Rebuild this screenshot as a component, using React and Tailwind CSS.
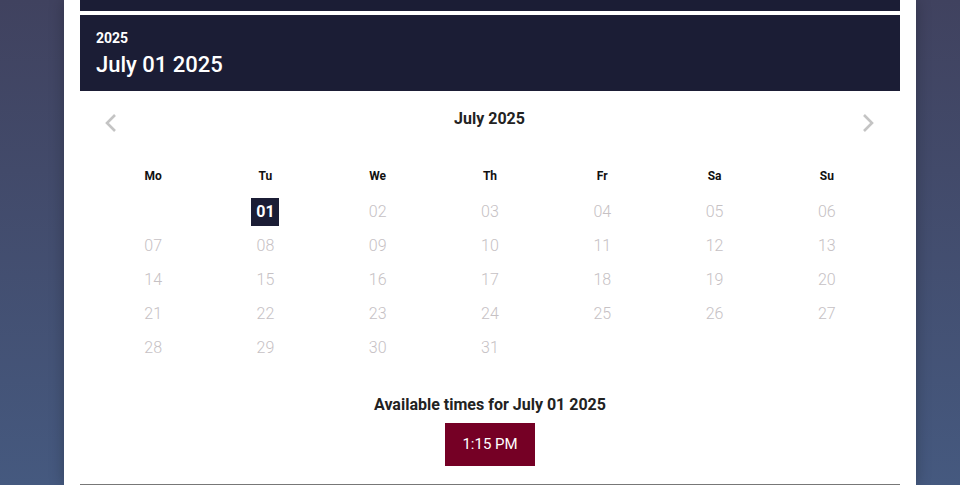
const days = Array.from({ length: 31 }, (_, i) => String(i + 1).padStart(2, '0'))
const heads = ['Mo', 'Tu', 'We', 'Th', 'Fr', 'Sa', 'Su']

function Chevron({ dir }) {
  return (
    <svg width="14" height="20" viewBox="0 0 14 20" fill="none" stroke="#c4c4c4" strokeWidth="2.6">
      {dir === 'left' ? <path d="M11 2 L3 10 L11 18" /> : <path d="M3 2 L11 10 L3 18" />}
    </svg>
  )
}

export default function App() {
  const cells = [null, ...days]
  return (
    <div className="min-h-[485px] h-[485px] overflow-hidden bg-gradient-to-b from-[#40425f] to-[#45597f] font-['Roboto',sans-serif]">
      <div className="ml-[64px] h-full w-[852px] bg-white px-4 shadow-[0_0_14px_rgba(0,0,0,0.25)]">
        <div className="h-[11px] bg-[#1b1d35]" />
        <div className="mt-1 h-[76px] bg-[#1b1d35] px-4 pt-[15px] text-white">
          <div className="text-[14px] font-bold leading-[16px]">2025</div>
          <div className="mt-[5px] text-[22px] font-medium leading-[28px]">July 01 2025</div>
        </div>
        <div className="px-[17px]">
          <div className="flex h-[62px] items-center justify-between pl-[7px] pr-[8px] pt-[2px]">
            <Chevron dir="left" />
            <div className="-mt-[9px] text-[16px] font-bold text-[#222]">July 2025</div>
            <Chevron dir="right" />
          </div>
          <div className="grid grid-cols-7 pt-[10px]">
            {heads.map((h) => (
              <div key={h} className="h-[26px] text-center text-[12px] font-bold leading-[26px] text-[#111]">
                {h}
              </div>
            ))}
          </div>
          <div className="mt-[6px] grid grid-cols-7">
            {cells.map((d, i) => (
              <div key={i} className="flex h-[34px] items-center justify-center">
                {d === '01' ? (
                  <span className="flex h-[28px] w-[28px] items-center justify-center bg-[#1b1d35] text-[16px] font-bold text-white">
                    01
                  </span>
                ) : (
                  <span className="text-[16px] font-light text-[#c6c1c4]">{d}</span>
                )}
              </div>
            ))}
          </div>
        </div>
        <div className="mt-[30px] text-center text-[16px] font-bold leading-[20px] text-[#222]">
          Available times for July 01 2025
        </div>
        <div className="mt-[8px] flex justify-center">
          <button className="h-[43px] w-[90px] bg-[#750025] text-[15px] text-white">1:15 PM</button>
        </div>
        <div className="mt-[18px] h-px bg-[#777]" />
      </div>
    </div>
  )
}
